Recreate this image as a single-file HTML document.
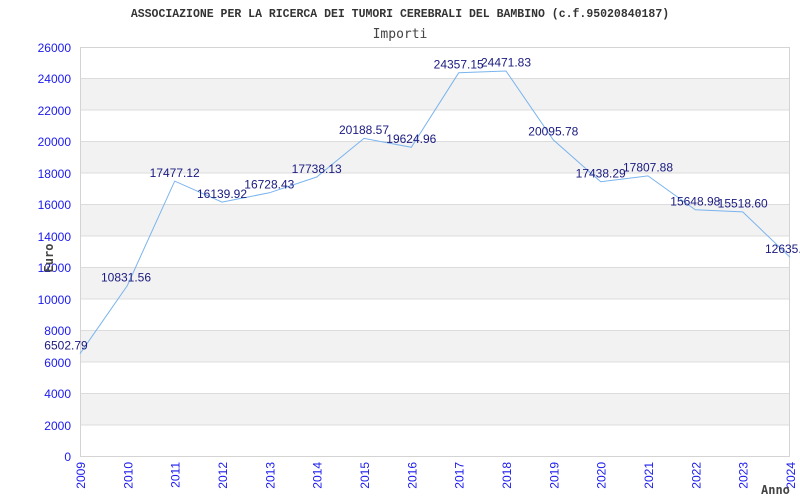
<!DOCTYPE html>
<html><head><meta charset="utf-8"><style>
html,body{margin:0;padding:0;background:#fff;width:800px;height:500px;overflow:hidden}
</style></head><body>
<svg width="800" height="500" xmlns="http://www.w3.org/2000/svg" style="display:block">
<rect width="800" height="500" fill="#fff"/>
<g fill="#f2f2f2">
<rect x="80" y="78.5" width="710" height="31.5"/>
<rect x="80" y="141.5" width="710" height="31.5"/>
<rect x="80" y="204.5" width="710" height="31.5"/>
<rect x="80" y="267.5" width="710" height="31.5"/>
<rect x="80" y="330.5" width="710" height="31.5"/>
<rect x="80" y="393.5" width="710" height="31.5"/>
</g>
<g stroke="#dcdcdc" stroke-width="1">
<line x1="80" y1="78.5" x2="790" y2="78.5"/>
<line x1="80" y1="110" x2="790" y2="110"/>
<line x1="80" y1="141.5" x2="790" y2="141.5"/>
<line x1="80" y1="173" x2="790" y2="173"/>
<line x1="80" y1="204.5" x2="790" y2="204.5"/>
<line x1="80" y1="236" x2="790" y2="236"/>
<line x1="80" y1="267.5" x2="790" y2="267.5"/>
<line x1="80" y1="299" x2="790" y2="299"/>
<line x1="80" y1="330.5" x2="790" y2="330.5"/>
<line x1="80" y1="362" x2="790" y2="362"/>
<line x1="80" y1="393.5" x2="790" y2="393.5"/>
<line x1="80" y1="425" x2="790" y2="425"/>
</g>
<rect x="80.5" y="47.5" width="709" height="409" fill="none" stroke="#d4d4d4"/>
<text x="400" y="17" text-anchor="middle" font-family="Liberation Mono, monospace" font-weight="bold" font-size="11.5" fill="#333">ASSOCIAZIONE PER LA RICERCA DEI TUMORI CEREBRALI DEL BAMBINO (c.f.95020840187)</text>
<text x="400" y="38" text-anchor="middle" font-family="DejaVu Sans Mono, monospace" font-size="13" fill="#444">Importi</text>
<g font-family="Liberation Sans, sans-serif" font-size="12" fill="#1a1aee" text-anchor="end">
<text x="71" y="52">26000</text><text x="71" y="83">24000</text><text x="71" y="115">22000</text>
<text x="71" y="146">20000</text><text x="71" y="178">18000</text><text x="71" y="209">16000</text>
<text x="71" y="241">14000</text><text x="71" y="272">12000</text><text x="71" y="304">10000</text>
<text x="71" y="335">8000</text><text x="71" y="367">6000</text><text x="71" y="398">4000</text>
<text x="71" y="430">2000</text><text x="71" y="461">0</text>
</g>
<g font-family="Liberation Sans, sans-serif" font-size="12" fill="#1a1aee" text-anchor="end">
<text transform="translate(85,462) rotate(-90)">2009</text>
<text transform="translate(132.3,462) rotate(-90)">2010</text>
<text transform="translate(179.7,462) rotate(-90)">2011</text>
<text transform="translate(227,462) rotate(-90)">2012</text>
<text transform="translate(274.3,462) rotate(-90)">2013</text>
<text transform="translate(321.7,462) rotate(-90)">2014</text>
<text transform="translate(369,462) rotate(-90)">2015</text>
<text transform="translate(416.3,462) rotate(-90)">2016</text>
<text transform="translate(463.7,462) rotate(-90)">2017</text>
<text transform="translate(511,462) rotate(-90)">2018</text>
<text transform="translate(558.3,462) rotate(-90)">2019</text>
<text transform="translate(605.7,462) rotate(-90)">2020</text>
<text transform="translate(653,462) rotate(-90)">2021</text>
<text transform="translate(700.3,462) rotate(-90)">2022</text>
<text transform="translate(747.7,462) rotate(-90)">2023</text>
<text transform="translate(795,462) rotate(-90)">2024</text>
</g>
<text transform="translate(53,258) rotate(-90)" text-anchor="middle" font-family="DejaVu Sans Mono, monospace" font-weight="bold" font-size="12" fill="#444">Euro</text>
<text x="761" y="494" font-family="DejaVu Sans Mono, monospace" font-weight="bold" font-size="12" fill="#444">Anno</text>
<polyline fill="none" stroke="#7ab4ee" stroke-width="1" points="80,353.7 127.3,285.6 174.7,181.1 222,202.1 269.3,192.8 316.7,177 364,138.4 411.3,147.3 458.7,72.8 506,71 553.3,139.9 600.7,181.7 648,175.9 695.3,209.8 742.7,211.9 790,257.2"/>
<g font-family="Liberation Sans, sans-serif" font-size="12" fill="#1a1a80" text-anchor="middle">
<text x="66" y="349.5">6502.79</text>
<text x="126" y="281.5">10831.56</text>
<text x="174.7" y="177">17477.12</text>
<text x="222" y="198">16139.92</text>
<text x="269.3" y="188.5">16728.43</text>
<text x="316.7" y="173">17738.13</text>
<text x="364" y="134">20188.57</text>
<text x="411.3" y="143">19624.96</text>
<text x="458.7" y="68.5">24357.15</text>
<text x="506" y="66.5">24471.83</text>
<text x="553.3" y="135.5">20095.78</text>
<text x="600.7" y="177.5">17438.29</text>
<text x="648" y="171.5">17807.88</text>
<text x="695.3" y="205.5">15648.98</text>
<text x="742.7" y="207.5">15518.60</text>
<text x="790" y="253">12635.00</text>
</g>
</svg>
</body></html>
